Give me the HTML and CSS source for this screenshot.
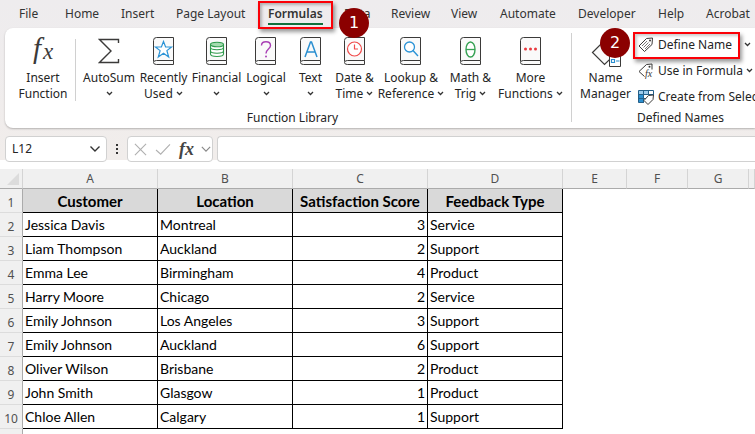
FILE: index.html
```html
<!DOCTYPE html>
<html lang="en">
<head>
<meta charset="utf-8">
<title>Spreadsheet</title>
<link rel="stylesheet" href="styles.css">
</head>
<body>
<svg class="defs" aria-hidden="true">
  <symbol id="book" viewBox="0 0 22 28">
    <path d="M3.500 .5H20.500V27.500H3.500Q.5 27.500 .5 24.500V3.500Q.5 .5 3.500 .5Z" fill="#fafafa"/>
    <path d="M20.500 23.500V.5H3.500Q.5 .5 .5 3.500V24.500M20.500 23.500H3.500Q.5 23.500 .5 25.500T3.500 27.500H20.500V23.500" fill="none" stroke="#3b3a39"/>
  </symbol>
  <symbol id="chev" viewBox="0 0 7 5"><path d="M1 1L3.500 3.500L6 1" fill="none" stroke="#333" stroke-width="1.300"/></symbol>
</svg>

<nav class="tabs" aria-label="Ribbon tabs">
  <a href="#file">File</a>
  <a href="#home">Home</a>
  <a href="#insert">Insert</a>
  <a href="#layout">Page Layout</a>
  <a href="#formulas" class="active">Formulas</a>
  <a href="#data">Data<span class="badge badge-one">1</span></a>
  <a href="#review">Review</a>
  <a href="#view">View</a>
  <a href="#automate">Automate</a>
  <a href="#developer">Developer</a>
  <a href="#help">Help</a>
  <a href="#acrobat">Acrobat</a>
</nav>

<section class="ribbon" aria-label="Formulas">
  <div class="group library">
    <div class="tools">
      <button class="tool insert-fn">
        <svg class="icon wide" viewBox="0 0 26 28"><text x="3" y="21" class="fx-big">f</text><text x="13" y="22" class="fx-small">x</text></svg>
        <span>Insert<br>Function</span>
      </button>
      <button class="tool">
        <svg class="icon" viewBox="0 0 22 28"><path d="M20.500 6V2.500H1.500L13 14L1.500 25.500H20.500V22" fill="none" stroke="#3b3a39" stroke-width="1.400"/></svg>
        <span>AutoSum<br><svg class="chev"><use href="#chev"/></svg></span>
      </button>
      <button class="tool">
        <svg class="icon" viewBox="0 0 22 28"><use href="#book"/><path d="M10.500 4.500L12.600 10H18.500L13.900 13.600L15.700 20L10.500 16.300L5.300 20L7.100 13.600L2.500 10H8.400Z" fill="#fff" stroke="#2b93d6" stroke-width="1.200"/></svg>
        <span>Recently<br>Used <svg class="chev"><use href="#chev"/></svg></span>
      </button>
      <button class="tool">
        <svg class="icon" viewBox="0 0 22 28"><use href="#book"/><g fill="#fff" stroke="#2f9a4c" stroke-width="1.100"><path d="M4.500 7.500V17C4.500 20.300 17.500 20.300 17.500 17V7.500"/><path d="M4.500 10.500C4.500 13.500 17.500 13.500 17.500 10.500M4.500 14C4.500 17 17.500 17 17.500 14" fill="none"/><ellipse cx="11" cy="7.500" rx="6.500" ry="2.300" fill="#a5dbb0"/></g></svg>
        <span>Financial<br><svg class="chev"><use href="#chev"/></svg></span>
      </button>
      <button class="tool">
        <svg class="icon" viewBox="0 0 22 28"><use href="#book"/><path d="M6.500 8.500C6.500 3.500 15.500 3.500 15.500 8.500C15.500 12 11 12 11 16.500" fill="none" stroke="#a940b5" stroke-width="1.400"/><circle cx="11" cy="19.500" r="1" fill="#a940b5"/></svg>
        <span>Logical<br><svg class="chev"><use href="#chev"/></svg></span>
      </button>
      <button class="tool">
        <svg class="icon" viewBox="0 0 22 28"><use href="#book"/><path d="M5 20L10.500 5H11.500L17 20M7 15H15" fill="none" stroke="#2b8fd0" stroke-width="1.500"/></svg>
        <span>Text<br><svg class="chev"><use href="#chev"/></svg></span>
      </button>
      <button class="tool">
        <svg class="icon" viewBox="0 0 22 28"><use href="#book"/><circle cx="10.500" cy="12" r="7" fill="#fff" stroke="#f04a4a" stroke-width="1.200"/><path d="M10.500 7.500V12H14" fill="none" stroke="#f04a4a" stroke-width="1.200"/></svg>
        <span>Date &amp;<br>Time <svg class="chev"><use href="#chev"/></svg></span>
      </button>
      <button class="tool">
        <svg class="icon" viewBox="0 0 22 28"><use href="#book"/><circle cx="9.500" cy="10" r="5" fill="#fff" stroke="#2b93d6" stroke-width="1.300"/><path d="M13 13.500L18 19" stroke="#2b93d6" stroke-width="1.400"/></svg>
        <span>Lookup &amp;<br>Reference <svg class="chev"><use href="#chev"/></svg></span>
      </button>
      <button class="tool">
        <svg class="icon" viewBox="0 0 22 28"><use href="#book"/><ellipse cx="10.500" cy="12.500" rx="4.500" ry="7.500" fill="#fff" stroke="#35a153" stroke-width="1.400"/><path d="M6 12.500H15" stroke="#35a153" stroke-width="1.300"/></svg>
        <span>Math &amp;<br>Trig <svg class="chev"><use href="#chev"/></svg></span>
      </button>
      <button class="tool">
        <svg class="icon" viewBox="0 0 22 28"><use href="#book"/><g fill="#e8383d"><circle cx="5.500" cy="12" r="1.500"/><circle cx="10.500" cy="12" r="1.500"/><circle cx="15.500" cy="12" r="1.500"/></g></svg>
        <span>More<br>Functions <svg class="chev"><use href="#chev"/></svg></span>
      </button>
    </div>
    <h2>Function Library</h2>
  </div>

  <div class="group names">
    <div class="tools">
      <button class="tool manager">
        <svg class="icon manager-icon" viewBox="0 0 32 30"><path d="M2.500 15.500L15 3H27.500V15L14.500 27.500Z" fill="#fafafa" stroke="#3b3a39" stroke-width="1.200"/><path d="M19.500 17.500H30.500V29.500H19.500Z" fill="#fff" stroke="#3b3a39"/><path d="M21.500 22.500H24.500V25.500H21.500ZM26 24H29.500" fill="none" stroke="#2b8fd0" stroke-width="1.200"/></svg>
        <span>Name<br>Manager</span>
        <span class="badge badge-two">2</span>
      </button>
      <div class="stack">
        <div class="split">
          <button class="row marked">
            <svg viewBox="0 0 16 16"><path d="M1 9L8.500 1.500L14.500 1L14 7.500L6.500 14.500Z" fill="#fff" stroke="#3b3a39"/><circle cx="12" cy="3.600" r="1" fill="#3b3a39"/><path d="M4 9L9 4M5.500 10.500L10.500 5.500M7 12L12 7" stroke="#555" stroke-width=".8"/></svg>
            Define Name
          </button>
          <button class="more" aria-label="Define Name options"><svg class="chev"><use href="#chev"/></svg></button>
        </div>
        <button class="row">
          <svg viewBox="0 0 16 16"><path d="M6.500 13.500L1 8.500L8.500 1.500L14 1V6.500" fill="none" stroke="#3b3a39"/><circle cx="11.500" cy="3.800" r="1" fill="#3b3a39"/><text x="7" y="14" class="fx-mini">fx</text></svg>
          <span>Use in Formula <svg class="chev"><use href="#chev"/></svg></span>
        </button>
        <button class="row">
          <svg viewBox="0 0 16 16"><path d="M.5 1.500H15.500V13.500H.5Z" fill="#fff"/><path d="M.5 1.500H10.500V5.500H.5Z" fill="#9ccbec"/><path d="M.5 5.500H5.500V13.500H.5Z" fill="#2b8fd0"/><path d="M6 13.500H.5V1.500H15.500V6M.5 5.500H15M.5 9.500H8M5.500 1.500V13M10.500 1.500V6" fill="none" stroke="#245f88"/><path d="M6 11.500L10.500 6.500L15.500 6L15 10.500L10 15.500Z" fill="#fff" stroke="#3b3a39"/></svg>
          Create from Selection
        </button>
      </div>
    </div>
    <h2>Defined Names</h2>
  </div>
</section>

<div class="formula-bar">
  <div class="name-box">
    <input type="text" value="L12" aria-label="Name box">
    <button aria-label="Open name list"><svg viewBox="0 0 12 8"><path d="M1.500 1.500L6 6L10.500 1.500" fill="none" stroke="#333" stroke-width="1.400"/></svg></button>
  </div>
  <svg class="dots" viewBox="0 0 4 12" aria-hidden="true"><path d="M1 1H3V3H1ZM1 5H3V7H1ZM1 9H3V11H1Z" fill="#333"/></svg>
  <div class="entry-tools">
    <button aria-label="Cancel"><svg viewBox="0 0 14 14"><path d="M1 1L13 13M13 1L1 13" stroke="#b0b0b0" stroke-width="1.200"/></svg></button>
    <button aria-label="Enter"><svg class="tick" viewBox="0 0 18 14"><path d="M1.500 7.500L6.500 12L16.500 1.500" fill="none" stroke="#b0b0b0" stroke-width="1.200"/></svg></button>
    <button class="fx-button" aria-label="Insert function"><i>fx</i></button>
    <button aria-label="Function options"><svg class="small" viewBox="0 0 12 8"><path d="M1 1.500L6 6.500L11 1.500" fill="none" stroke="#888" stroke-width="1.400"/></svg></button>
  </div>
  <input class="formula" type="text" aria-label="Formula">
</div>

<table class="sheet">
  <colgroup><col class="c-head"><col class="c-data"><col class="c-data"><col class="c-data"><col class="c-data"><col class="c-e"><col class="c-f"><col class="c-f"><col></colgroup>
  <thead>
    <tr><th class="corner"><svg viewBox="0 0 12 12" aria-hidden="true"><path d="M12 0V12H0Z" fill="#dcdcdc"/></svg></th><th>A</th><th>B</th><th>C</th><th>D</th><th>E</th><th>F</th><th>G</th><th></th></tr>
  </thead>
  <tbody>
    <tr class="titles"><th>1</th><td>Customer</td><td>Location</td><td>Satisfaction Score</td><td>Feedback Type</td></tr>
    <tr><th>2</th><td>Jessica Davis</td><td>Montreal</td><td class="num">3</td><td>Service</td></tr>
    <tr><th>3</th><td>Liam Thompson</td><td>Auckland</td><td class="num">2</td><td>Support</td></tr>
    <tr><th>4</th><td>Emma Lee</td><td>Birmingham</td><td class="num">4</td><td>Product</td></tr>
    <tr><th>5</th><td>Harry Moore</td><td>Chicago</td><td class="num">2</td><td>Service</td></tr>
    <tr><th>6</th><td>Emily Johnson</td><td>Los Angeles</td><td class="num">3</td><td>Support</td></tr>
    <tr><th>7</th><td>Emily Johnson</td><td>Auckland</td><td class="num">6</td><td>Support</td></tr>
    <tr><th>8</th><td>Oliver Wilson</td><td>Brisbane</td><td class="num">2</td><td>Product</td></tr>
    <tr><th>9</th><td>John Smith</td><td>Glasgow</td><td class="num">1</td><td>Product</td></tr>
    <tr><th>10</th><td>Chloe Allen</td><td>Calgary</td><td class="num">1</td><td>Support</td></tr>
    <tr class="blank"><th></th></tr>
  </tbody>
</table>
</body>
</html>
```
FILE: styles.css
```css
* { box-sizing: border-box; }
html { height: 100%; overflow: hidden; }
body {
  margin: 0;
  min-height: 100%;
  overflow: hidden;
  background: linear-gradient(#eeecee, #f1edeb 160px, #fff 160px);
  color: #242424;
  font: 12px/16px "Noto Sans", "Open Sans", sans-serif;
}
button, input { font: inherit; color: inherit; border: 0; background: none; padding: 0; margin: 0; }
svg { display: block; }
.defs { position: absolute; width: 0; height: 0; }

/* Tabs */
.tabs {
  display: grid;
  grid-template-columns: 46px 56px 55px 92px 76px 47px 60px 49px 78px 80px 48px auto;
  padding: 0 0 0 19px;
  height: 28px;
}
.tabs a {
  position: relative;
  justify-self: start;
  padding: 5px 0 0;
  line-height: 18px;
  color: #333;
  text-decoration: none;
  white-space: nowrap;
}
.tabs .active { font-weight: 600; }
.tabs .active::before {
  content: "";
  position: absolute;
  inset: 23px 0 auto;
  height: 2px;
  background: #0f703b;
}
.tabs .active::after {
  content: "";
  position: absolute;
  inset: 1px -10px -1px;
  border: 2px solid #fb0007;
  box-shadow: 2px 3px 4px rgba(0, 0, 0, .4), inset 2px 2px 3px rgba(0, 0, 0, .25);
  z-index: 2;
}
.badge {
  position: absolute;
  display: grid;
  place-items: center;
  width: 30px;
  height: 30px;
  border-radius: 50%;
  background: #8b0000;
  color: #fff;
  font: 16px/20px "DejaVu Sans", sans-serif;
  z-index: 3;
}
.badge-one { left: -5px; top: 8px; }
.badge-two { left: 20px; top: -6px; }

/* Ribbon */
.ribbon {
  position: relative;
  display: flex;
  height: 100px;
  margin-left: 5px;
  border-radius: 8px 0 0 8px;
  background: #fff;
  box-shadow: 0 1px 2px rgba(0, 0, 0, .25);
}
.group { flex: none; display: flex; flex-direction: column; padding: 6px 8px 0; }
.library { position: relative; padding-right: 0; }
.library::after {
  content: "";
  position: absolute;
  inset: 5px 0 6px auto;
  width: 1px;
  background: #d0d0d0;
}
.tools { display: grid; height: 76px; }
.library .tools { grid-template-columns: 69px 54px 55px 51px 48px 41px 47px 66px 53px 75px; }
.group h2 { margin: 0; font-size: 12px; font-weight: 400; line-height: 16px; text-align: center; }
.tool {
  display: flex;
  flex-direction: column;
  align-items: center;
  gap: 5px;
  padding-top: 3px;
  white-space: nowrap;
}
.insert-fn { position: relative; padding-right: 9px; }
.insert-fn::after {
  content: "";
  position: absolute;
  inset: 5px 6px 9px auto;
  width: 1px;
  background: #d0d0d0;
}
.tool:last-child { padding-right: 8px; }
.icon { width: 22px; height: 28px; }
.icon.wide { width: 26px; }
.chev { display: inline-block; width: 7px; height: 5px; vertical-align: 2px; }
.fx-big, .fx-small, .fx-mini { font-family: "Liberation Serif", serif; font-style: italic; fill: #3b3a39; }
.fx-big { font-size: 29px; }
.fx-small { font-size: 23px; }
.fx-mini { font-size: 10px; }

.names { width: 217px; }
.names .tools { grid-template-columns: 51px auto; }
.names .tool { position: relative; padding-right: 0; }
.names .manager-icon { width: 32px; height: 30px; margin-bottom: -2px; }
.stack { display: grid; grid-template-rows: repeat(3, 26px); margin: -2px 0 0 7px; }
.split { display: flex; }
.row { position: relative; display: flex; align-items: center; gap: 4px; white-space: nowrap; }
.row > svg:first-child { width: 16px; height: 16px; }
.marked::after {
  content: "";
  position: absolute;
  inset: 0 -8px -1px -5px;
  border: 2px solid #fb0007;
  box-shadow: 2px 3px 4px rgba(0, 0, 0, .4), inset 2px 2px 3px rgba(0, 0, 0, .2);
}
.more { margin-left: 12px; }

/* Formula bar */
.formula-bar {
  display: flex;
  align-items: center;
  padding: 8px 0 7px 5px;
}
.name-box, .entry-tools, .formula {
  display: flex;
  align-items: center;
  height: 26px;
  border: 1px solid #d1d1d1;
  border-radius: 4px;
  background: #fff;
}
.name-box { width: 102px; padding: 0 5px 0 6px; }
.name-box input { flex: 1; min-width: 0; }
.name-box svg { width: 12px; height: 8px; }
.dots { width: 4px; height: 12px; margin: 0 8px; }
.entry-tools { width: 86px; padding: 0 1px 0 6px; justify-content: space-between; }
.entry-tools svg { width: 13px; height: 13px; }
.entry-tools .tick { width: 18px; }
.entry-tools .small { width: 10px; height: 8px; }
.fx-button { font: bold 18px/20px "Liberation Serif", serif; color: #444; }
.formula { flex: 1; min-width: 0; margin-left: 4px; border-right: 0; border-radius: 4px 0 0 4px; }

/* Sheet */
.sheet { width: 100%; table-layout: fixed; border-collapse: separate; border-spacing: 0; color: #000; background: #fff; }
.c-head { width: 23px; }
.c-data { width: 135px; }
.c-e { width: 64px; }
.c-f { width: 61px; }
.sheet th { padding: 0; font-weight: 400; color: #505050; background: #f0f0f0; }
.sheet thead th {
  height: 20px;
  line-height: 16px;
  border-bottom: 1px solid #ababab;
  border-right: 1px solid #d4d4d4;
}
.corner svg { width: 12px; height: 12px; margin-left: 7px; }
.sheet tbody th {
  height: 24px;
  padding-top: 4px;
  border-right: 1px solid #ababab;
  border-bottom: 1px solid #dcdcdc;
}
.sheet td {
  height: 24px;
  padding: 0 2px;
  border-right: 1px solid #000;
  border-bottom: 1px solid #000;
  font-family: Lato, "Noto Sans", sans-serif;
  font-size: 14px;
  white-space: nowrap;
}
.sheet .titles td { background: #d9d9d9; font-size: 15px; font-weight: 700; text-align: center; }
.sheet .num { text-align: right; }
```
